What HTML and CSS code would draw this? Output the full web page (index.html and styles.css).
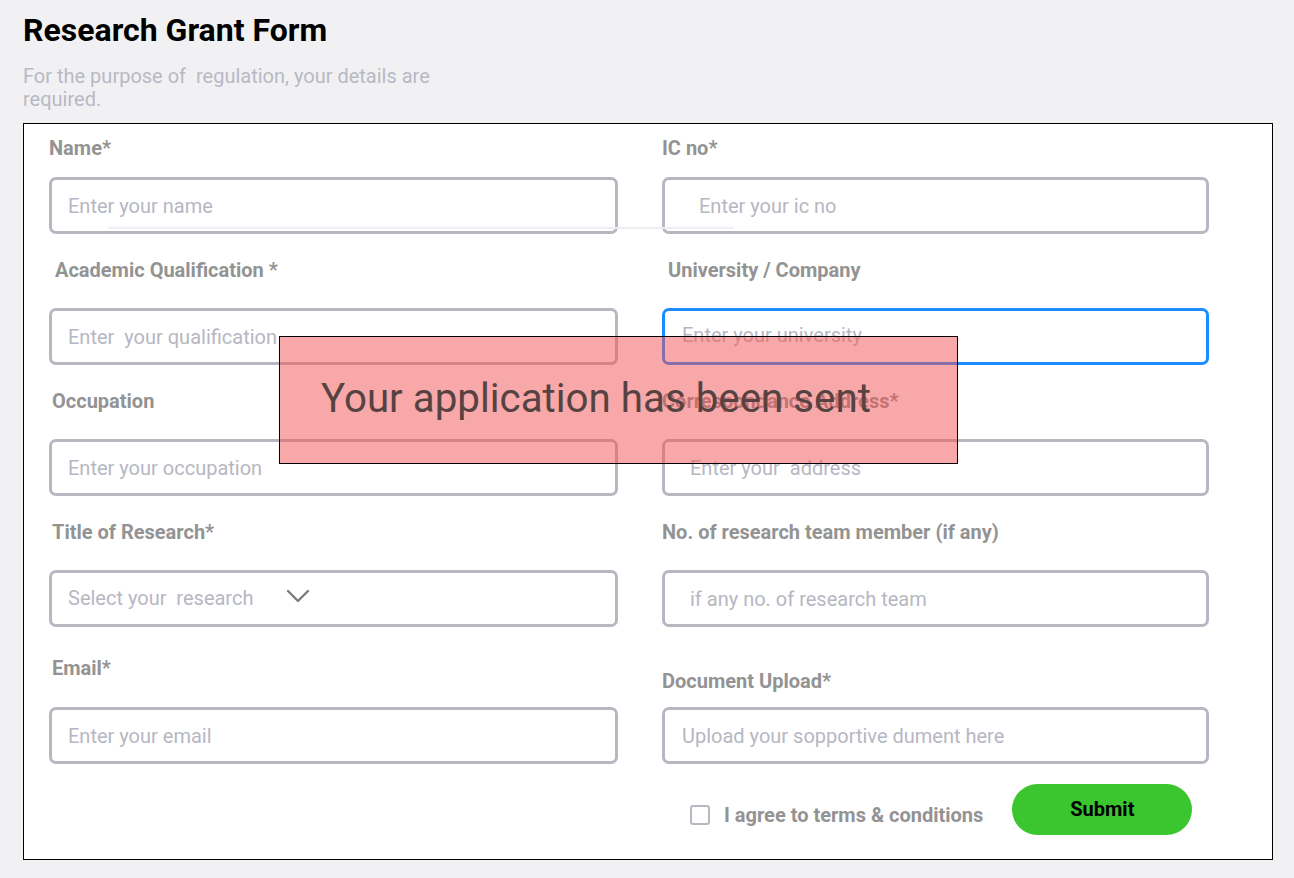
FILE: index.html
```html
<!DOCTYPE html>
<html lang="en">
<head>
<meta charset="utf-8">
<title>Research Grant Form</title>
<link rel="stylesheet" href="styles.css">
</head>
<body>
<div class="page">
  <header class="header">
    <h1 class="title">Research Grant Form</h1>
    <p class="subtitle">For the purpose of&nbsp; regulation, your details are required.</p>
  </header>

  <form class="card">
    <div class="grid">
      <div class="field first">
        <label class="label">Name*</label>
        <input class="input" type="text" placeholder="Enter your name">
      </div>
      <div class="field first">
        <label class="label">IC no*</label>
        <input class="input pad-ic" type="text" placeholder="Enter your ic no">
      </div>

      <div class="field">
        <label class="label indent-6">Academic Qualification *</label>
        <input class="input" type="text" placeholder="Enter&nbsp; your qualification">
      </div>
      <div class="field">
        <label class="label indent-6">University / Company</label>
        <input class="input input-focus pad-30" type="text" placeholder="Enter your university">
      </div>

      <div class="field">
        <label class="label indent-3">Occupation</label>
        <input class="input" type="text" placeholder="Enter your occupation">
      </div>
      <div class="field">
        <label class="label">Correspondance Address*</label>
        <input class="input pad-38" type="text" placeholder="Enter your  address">
      </div>

      <div class="field">
        <label class="label indent-3">Title of Research*</label>
        <div class="input select">
          <span class="placeholder">Select your&nbsp; research</span>
          <svg class="chevron" width="24" height="14" viewBox="0 0 24 14" aria-hidden="true">
            <path d="M2 2 L12 12 L22 2" fill="none" stroke="#7c7c80" stroke-width="2.4" stroke-linecap="round" stroke-linejoin="round"/>
          </svg>
        </div>
      </div>
      <div class="field">
        <label class="label">No. of research team member (if any)</label>
        <input class="input pad-38" type="text" placeholder="if any no. of research team">
      </div>

      <div class="field">
        <label class="label indent-3 email-label">Email*</label>
        <input class="input" type="text" placeholder="Enter your email">
      </div>
      <div class="field">
        <label class="label upload-label">Document Upload*</label>
        <input class="input pad-30" type="text" placeholder="Upload your sopportive dument here">
      </div>

      <div></div>
      <div class="actions">
        <label class="agree">
          <span class="checkbox"></span>
          <span>I agree to terms &amp; conditions</span>
        </label>
        <button class="submit" type="button">Submit</button>
      </div>
    </div>

    <div class="ghost-line"></div>
    <div class="toast">Your application has been sent</div>
  </form>
</div>
</body>
</html>
```

FILE: styles.css
```css
* { box-sizing: border-box; }

html, body {
  margin: 0;
  padding: 0;
  background: #f1f1f3;
  font-family: Roboto, "Liberation Sans", Arial, sans-serif;
}

.page {
  padding: 10px 21px 0 23px;
}

.title {
  margin: 0;
  font-size: 32px;
  line-height: 40px;
  font-weight: 700;
  color: #000;
}

.subtitle {
  margin: 15px 0 0;
  width: 440px;
  font-size: 20px;
  line-height: 23px;
  color: #b8b9c3;
}

.card {
  position: relative;
  margin-top: 12px;
  width: 1250px;
  height: 737px;
  background: #fff;
  border: 1px solid #000;
  padding: 13px 64px 0 25px;
}

.grid {
  display: grid;
  grid-template-columns: 569px 547px;
  column-gap: 44px;
  row-gap: 25px;
}

.field {
  display: flex;
  flex-direction: column;
}

.label {
  display: block;
  font-size: 20px;
  line-height: 22px;
  font-weight: 700;
  color: #939393;
  margin-bottom: 27px;
}

.first .label { margin-bottom: 18px; }

.indent-3 { padding-left: 3px; }
.indent-6 { padding-left: 6px; }

.email-label { margin-top: 5px; margin-bottom: 28px; }
.upload-label { margin-top: 18px; margin-bottom: 15px; }

.input {
  display: block;
  width: 100%;
  height: 57px;
  border: 3px solid #b6b7c1;
  border-radius: 7px;
  background: #fff;
  padding: 0 16px;
  font-family: Roboto, "Liberation Sans", Arial, sans-serif;
  font-size: 20px;
  color: #444;
  outline: none;
}

.input::placeholder,
.placeholder {
  color: #b6b7c2;
  opacity: 1;
}

.pad-ic { padding-left: 34px; }
.pad-30 { padding-left: 17px; }
.pad-38 { padding-left: 25px; }

.input-focus {
  border-color: #1a8cff;
  padding-bottom: 4px;
}

.select {
  display: flex;
  align-items: center;
  font-size: 20px;
  padding-bottom: 2px;
}

.chevron {
  margin-left: 33px;
  margin-top: -4px;
}

.actions {
  display: flex;
  align-items: center;
  padding-left: 28px;
  margin-top: -5px;
}

.agree {
  display: flex;
  align-items: center;
  gap: 14px;
  font-size: 20px;
  font-weight: 700;
  color: #939393;
  margin-top: 10px;
}

.checkbox {
  display: inline-block;
  width: 20px;
  height: 20px;
  border: 2px solid #b6b7c1;
  border-radius: 3px;
}

.submit {
  margin-left: 29px;
  width: 180px;
  height: 51px;
  border: none;
  border-radius: 26px;
  background: #3bc52f;
  font-family: Roboto, "Liberation Sans", Arial, sans-serif;
  font-size: 20px;
  font-weight: 700;
  color: #000;
  padding-bottom: 2px;
}

.ghost-line {
  position: absolute;
  left: 84px;
  top: 103px;
  width: 626px;
  height: 2px;
  background: #eeeff3;
}

.toast {
  position: absolute;
  left: 255px;
  top: 212px;
  width: 679px;
  height: 128px;
  border: 1px solid #000;
  background: rgba(242, 82, 82, 0.5);
  display: flex;
  align-items: center;
  padding-left: 41px;
  padding-bottom: 4px;
  font-size: 40.3px;
  font-weight: 400;
  color: #574242;
}
```
